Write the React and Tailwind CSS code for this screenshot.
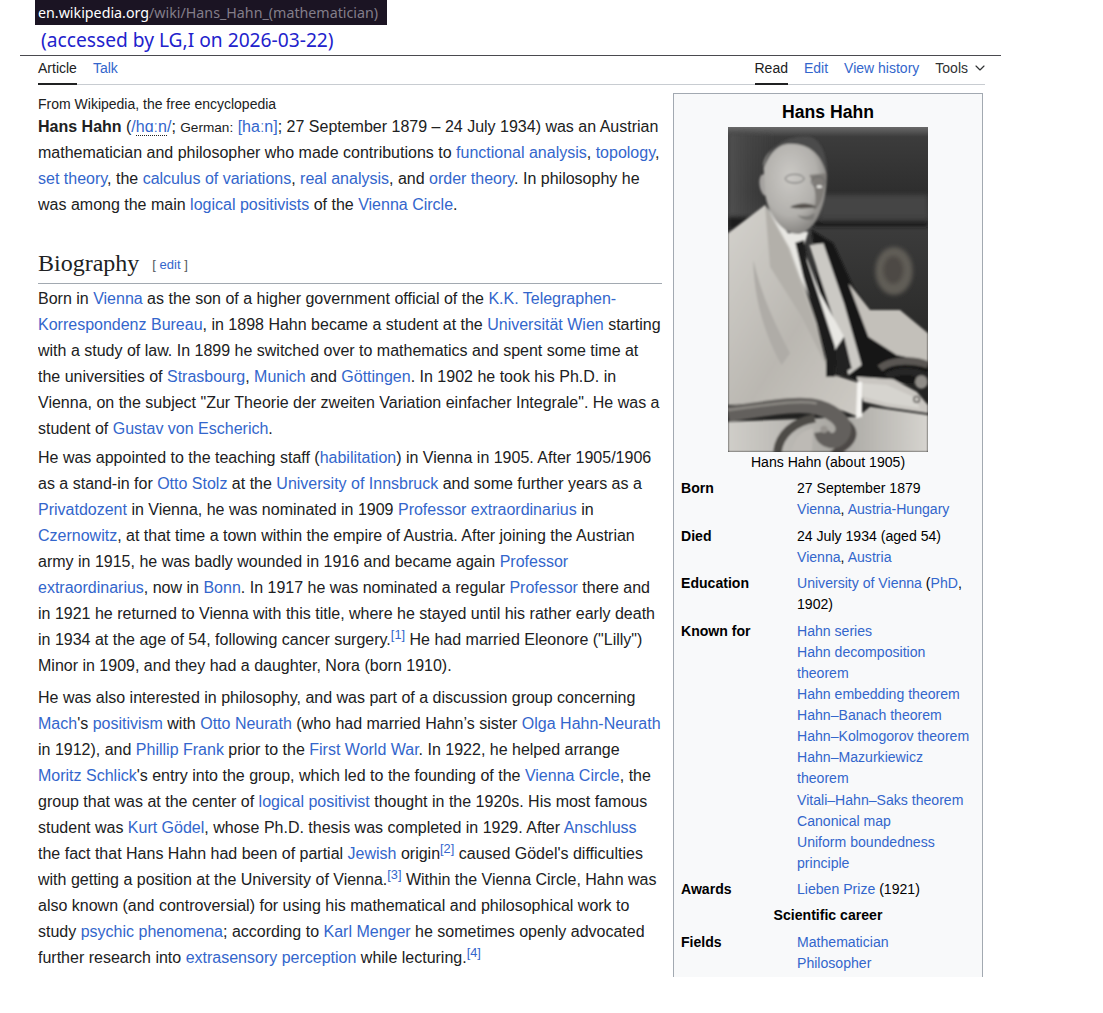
import { ChevronDown } from "lucide-react";

const sans = { fontFamily: '"Liberation Sans", Arial, sans-serif' };

function A({ children }) {
  return <a className="text-[#3366cc]">{children}</a>;
}

function Ref({ n }) {
  return <sup className="text-[12.8px] leading-none text-[#3366cc]">[{n}]</sup>;
}

// rough redraw of the portrait, coordinates follow the 600x975 crop
function Portrait() {
  return (
    <svg width="200" height="325" viewBox="24 21 600 975" className="block">
      <defs>
        <linearGradient id="wall" x1="0" y1="0" x2="0" y2="1">
          <stop offset="0" stopColor="#6a6a6a" />
          <stop offset="0.03" stopColor="#3c3c3c" />
          <stop offset="0.2" stopColor="#2e2e2e" />
          <stop offset="0.3" stopColor="#3c3c3c" />
          <stop offset="0.6" stopColor="#2c2c2b" />
          <stop offset="1" stopColor="#1d1d1c" />
        </linearGradient>
        <linearGradient id="leftwall" x1="0" y1="0" x2="1" y2="0">
          <stop offset="0" stopColor="#505050" />
          <stop offset="1" stopColor="#454545" stopOpacity="0.2" />
        </linearGradient>
        <linearGradient id="coat" x1="0" y1="0" x2="1" y2="1">
          <stop offset="0" stopColor="#d4d2cd" />
          <stop offset="0.55" stopColor="#bab7b1" />
          <stop offset="1" stopColor="#cecbc5" />
        </linearGradient>
        <radialGradient id="face" cx="0.42" cy="0.38" r="0.7">
          <stop offset="0" stopColor="#cbc9c5" />
          <stop offset="0.6" stopColor="#b2b0ac" />
          <stop offset="1" stopColor="#767471" />
        </radialGradient>
        <linearGradient id="seat" x1="0" y1="0" x2="1" y2="0">
          <stop offset="0" stopColor="#d0cec9" />
          <stop offset="0.55" stopColor="#a8a6a1" />
          <stop offset="1" stopColor="#d6d4cf" />
        </linearGradient>
        <filter id="soft">
          <feGaussianBlur stdDeviation="3.5" />
        </filter>
        <filter id="softer">
          <feGaussianBlur stdDeviation="7" />
        </filter>
      </defs>
      <rect x="24" y="21" width="600" height="975" fill="url(#wall)" />
      <g filter="url(#softer)">
        <rect x="24" y="40" width="130" height="250" fill="url(#leftwall)" />
        <rect x="24" y="290" width="110" height="40" fill="#1c1c1c" />
        <rect x="300" y="225" width="324" height="70" fill="#454544" />
        <rect x="280" y="305" width="344" height="14" fill="#141414" />
        <ellipse cx="522" cy="453" rx="56" ry="72" fill="#615d57" />
        <ellipse cx="520" cy="450" rx="30" ry="42" fill="#4d4a45" />
      </g>
      <g filter="url(#soft)">
        {/* dark coat side and far arm */}
        <path d="M275 330 L340 370 L400 500 L450 570 L624 640 L624 790 L420 790 L320 720 Z" fill="#161616" />
        <path d="M385 490 L450 570 L540 570 L624 640 L624 725 L530 705 L445 650 Z" fill="#c3c0ba" />
        {/* jacket */}
        <path d="M24 340 L135 255 L215 385 L290 610 L325 760 L420 790 L414 890 L300 845 L24 855 Z" fill="url(#coat)" />
        <path d="M135 255 L205 385 L295 640 L325 750 L245 590 L150 440 Z" fill="#b3b0aa" />
        <path d="M100 420 C125 530 165 610 210 700 L185 735 C135 650 100 530 100 420 Z" fill="#afaca7" />
        <path d="M268 375 L310 370 L372 550 L425 735 L385 765 L345 610 Z" fill="#cbc9c4" />
        {/* shirt and tie */}
        <path d="M140 260 L205 340 L265 335 L250 385 L300 520 L372 650 L345 695 L240 470 L210 385 Z" fill="#e8e7e3" />
        <path d="M226 368 L252 360 L262 425 L345 680 L345 770 L318 770 L318 700 L250 470 Z" fill="#1a1a1a" />
        <path d="M345 690 L372 650 L395 745 L350 770 Z" fill="#222222" />
        {/* head */}
        <path d="M124 165 C112 180 120 222 136 228 L150 200 L140 160 Z" fill="#a5a3a0" />
        <path d="M130 130 C146 55 292 32 318 130 C328 220 302 325 238 342 C192 345 146 290 136 225 Z" fill="url(#face)" />
        <path d="M130 148 C135 75 215 42 270 50 C305 60 324 110 320 165 C305 100 262 66 200 72 C165 78 145 108 130 148 Z" fill="#4b4b4b" />
        <path d="M268 165 C286 200 294 245 280 272 C302 262 316 215 320 160 Z" fill="#7f7c78" />
        <path d="M210 262 C235 247 270 247 290 262 C265 265 235 268 210 262 Z" fill="#524f4c" />
        <path d="M232 285 C250 292 268 290 284 278 L280 298 C262 304 245 298 232 285 Z" fill="#7d7b78" />
        <ellipse cx="224" cy="176" rx="28" ry="13" fill="none" stroke="#666666" strokeWidth="3" />
        <ellipse cx="294" cy="185" rx="20" ry="15" fill="none" stroke="#666666" strokeWidth="3" />
        <ellipse cx="298" cy="200" rx="9" ry="4" fill="#e8e7e3" />
        {/* far chair arm */}
        <path d="M480 745 C515 715 590 720 624 735" stroke="#5a5752" strokeWidth="22" fill="none" />
        <path d="M500 770 C530 750 580 750 624 770" stroke="#282725" strokeWidth="22" fill="none" />
        <ellipse cx="604" cy="786" rx="19" ry="20" fill="#8f8c87" />
        {/* seat */}
        <path d="M24 905 L414 890 L450 860 L624 885 L624 996 L24 996 Z" fill="url(#seat)" />
        <path d="M385 900 C420 925 420 965 370 996 L330 996 C380 960 385 930 385 900 Z" fill="#4d4a46" />
        {/* hand and cuff */}
        <path d="M410 770 L520 778 L590 815 L624 855 L624 880 L500 862 L430 845 Z" fill="#c9c6c1" />
        <path d="M425 790 L500 795 L580 830 L600 865 L500 850 L430 830 Z" fill="#d6d4cf" />
        <circle cx="590" cy="838" r="9" fill="none" stroke="#4a4744" strokeWidth="4" />
        <path d="M412 785 L426 785 L426 890 L408 895 Z" fill="#f5f4f1" />
        {/* chair scroll */}
        <path d="M24 882 C130 868 230 845 295 862 C355 880 382 915 365 945 C350 972 310 965 305 935" stroke="#64615d" strokeWidth="46" fill="none" />
        <path d="M24 870 C130 858 225 838 290 850" stroke="#8d8a85" strokeWidth="7" fill="none" />
        <path d="M172 996 C178 945 220 905 285 895" stroke="#4e4b47" strokeWidth="26" fill="none" />
        <path d="M215 996 C222 955 245 930 280 925 L275 996 Z" fill="#bdbab5" />
        <circle cx="312" cy="928" r="11" fill="#96938e" />
      </g>
    </svg>
  );
}

function Row({ label, children }) {
  return (
    <div className="grid grid-cols-[116px_1fr] py-[2.6px]">
      <div className="font-bold text-black">{label}</div>
      <div>{children}</div>
    </div>
  );
}

function Infobox() {
  return (
    <aside className="w-[310px] shrink-0 border border-[#a2a9b1] border-b-0 bg-[#f8f9fa] h-[884px] overflow-hidden text-[14.08px] leading-[21.12px] text-black px-[7px]">
      <div className="pt-[5px] text-center text-[17.6px] font-bold leading-[26px]">Hans Hahn</div>
      <div className="flex justify-center mt-[2px]">
        <Portrait />
      </div>
      <div className="text-center leading-[21px]">Hans Hahn (about 1905)</div>
      <div className="mt-[2.6px]">
        <Row label="Born">
          27 September 1879
          <br />
          <A>Vienna</A>, <A>Austria-Hungary</A>
        </Row>
        <Row label="Died">
          24 July 1934 (aged 54)
          <br />
          <A>Vienna</A>, <A>Austria</A>
        </Row>
        <Row label="Education">
          <A>University of Vienna</A> (<A>PhD</A>,
          <br />
          1902)
        </Row>
        <Row label="Known for">
          <A>Hahn series</A>
          <br />
          <A>Hahn decomposition</A>
          <br />
          <A>theorem</A>
          <br />
          <A>Hahn embedding theorem</A>
          <br />
          <A>Hahn–Banach theorem</A>
          <br />
          <A>Hahn–Kolmogorov theorem</A>
          <br />
          <A>Hahn–Mazurkiewicz</A>
          <br />
          <A>theorem</A>
          <br />
          <A>Vitali–Hahn–Saks theorem</A>
          <br />
          <A>Canonical map</A>
          <br />
          <A>Uniform boundedness</A>
          <br />
          <A>principle</A>
        </Row>
        <Row label="Awards">
          <A>Lieben Prize</A> (1921)
        </Row>
        <div className="py-[2.5px] text-center font-bold">Scientific career</div>
        <Row label="Fields">
          <A>Mathematician</A>
          <br />
          <A>Philosopher</A>
        </Row>
      </div>
    </aside>
  );
}

function Tabs() {
  return (
    <div className="flex h-[29px] w-[947px] items-start justify-between border-b border-[#c8ccd1] text-[14px] leading-[24px] text-[#202122]">
      <div className="flex gap-[16px]">
        <span className="h-[29px] border-b-2 border-[#202122]">Article</span>
        <span className="text-[#3366cc]">Talk</span>
      </div>
      <div className="flex gap-[16px]">
        <span className="h-[29px] border-b-2 border-[#202122]">Read</span>
        <span className="text-[#3366cc]">Edit</span>
        <span className="text-[#3366cc]">View history</span>
        <span className="flex h-[24px] items-center gap-[4px] text-[#303234]">
          Tools
          <ChevronDown size={16} strokeWidth={1.75} className="-mr-[3px]" />
        </span>
      </div>
    </div>
  );
}

export default function App() {
  return (
    <div className="h-[1013px] w-[1103px] overflow-hidden bg-white" style={sans}>
      <div className="ml-[35px] flex h-[25px] w-[352px] items-center bg-[#1b1423] pl-[3px] text-[14.25px] leading-[22px]" style={{ fontFamily: '"Noto Sans", sans-serif' }}>
        <span className="text-white">en.wikipedia.org</span>
        <span className="text-[#837e8a]">/wiki/Hans_Hahn_(mathematician)</span>
      </div>
      <div className="ml-[41px] h-[30px] pt-[2px] text-[19.2px] leading-[26px] text-[#2222cc]" style={{ fontFamily: '"Noto Sans", sans-serif' }}>
        (accessed by LG,I on 2026-03-22)
      </div>
      <div className="ml-[20px] w-[981px] border-t border-[#4a4a4f] pl-[18px]">
        <Tabs />
        <div className="flex h-[892px] items-start gap-[11px] overflow-hidden">
          <main className="w-[624px] shrink-0 pt-[9px] text-[16px] leading-[26px] text-[#202122]">
            <div className="text-[14px] leading-[20px]">From Wikipedia, the free encyclopedia</div>
            <p>
              <b>Hans Hahn</b> (<A>/<span className="border-b border-dotted border-[#202122]">hɑːn</span>/</A>; <span className="text-[13.6px] leading-none">German:</span> <A>[haːn]</A>; 27 September 1879 – 24 July 1934) was an Austrian mathematician and philosopher who made contributions to <A>functional analysis</A>, <A>topology</A>, <A>set theory</A>, the <A>calculus of variations</A>, <A>real analysis</A>, and <A>order theory</A>. In philosophy he was among the main <A>logical positivists</A> of the <A>Vienna Circle</A>.
            </p>
            <h2 className="mt-[28px] flex h-[38px] items-center gap-[13px] border-b border-[#a2a9b1] pb-[4px] text-[24px] text-[#202122]" style={{ fontFamily: '"Liberation Serif", serif' }}>
              Biography
              <span className="pt-[5px] text-[13px] text-[#54595d]" style={sans}>
                [ <A>edit</A> ]
              </span>
            </h2>
            <p className="mt-[2px]">
              Born in <A>Vienna</A> as the son of a higher government official of the <A>K.K. Telegraphen-Korrespondenz Bureau</A>, in 1898 Hahn became a student at the <A>Universität Wien</A> starting with a study of law. In 1899 he switched over to mathematics and spent some time at the universities of <A>Strasbourg</A>, <A>Munich</A> and <A>Göttingen</A>. In 1902 he took his Ph.D. in Vienna, on the subject "Zur Theorie der zweiten Variation einfacher Integrale". He was a student of <A>Gustav von Escherich</A>.
            </p>
            <p className="mt-[3px]">
              He was appointed to the teaching staff (<A>habilitation</A>) in Vienna in 1905. After 1905/1906 as a stand-in for <A>Otto Stolz</A> at the <A>University of Innsbruck</A> and some further years as a <A>Privatdozent</A> in Vienna, he was nominated in 1909 <A>Professor extraordinarius</A> in <A>Czernowitz</A>, at that time a town within the empire of Austria. After joining the Austrian army in 1915, he was badly wounded in 1916 and became again <A>Professor extraordinarius</A>, now in <A>Bonn</A>. In 1917 he was nominated a regular <A>Professor</A> there and in 1921 he returned to Vienna with this title, where he stayed until his rather early death in 1934 at the age of 54, following cancer surgery.<Ref n={1} /> He had married Eleonore ("Lilly") Minor in 1909, and they had a daughter, Nora (born 1910).
            </p>
            <p className="mt-[6px]">
              He was also interested in philosophy, and was part of a discussion group concerning <A>Mach</A>'s <A>positivism</A> with <A>Otto Neurath</A> (who had married Hahn’s sister <A>Olga Hahn-Neurath</A> in 1912), and <A>Phillip Frank</A> prior to the <A>First World War</A>. In 1922, he helped arrange <A>Moritz Schlick</A>'s entry into the group, which led to the founding of the <A>Vienna Circle</A>, the group that was at the center of <A>logical positivist</A> thought in the 1920s. His most famous student was <A>Kurt Gödel</A>, whose Ph.D. thesis was completed in 1929. After <A>Anschluss</A> the fact that Hans Hahn had been of partial <A>Jewish</A> origin<Ref n={2} /> caused Gödel's difficulties with getting a position at the University of Vienna.<Ref n={3} /> Within the Vienna Circle, Hahn was also known (and controversial) for using his mathematical and philosophical work to study <A>psychic phenomena</A>; according to <A>Karl Menger</A> he sometimes openly advocated further research into <A>extrasensory perception</A> while lecturing.<Ref n={4} />
            </p>
          </main>
          <div className="mt-[8px]">
            <Infobox />
          </div>
        </div>
      </div>
    </div>
  );
}
